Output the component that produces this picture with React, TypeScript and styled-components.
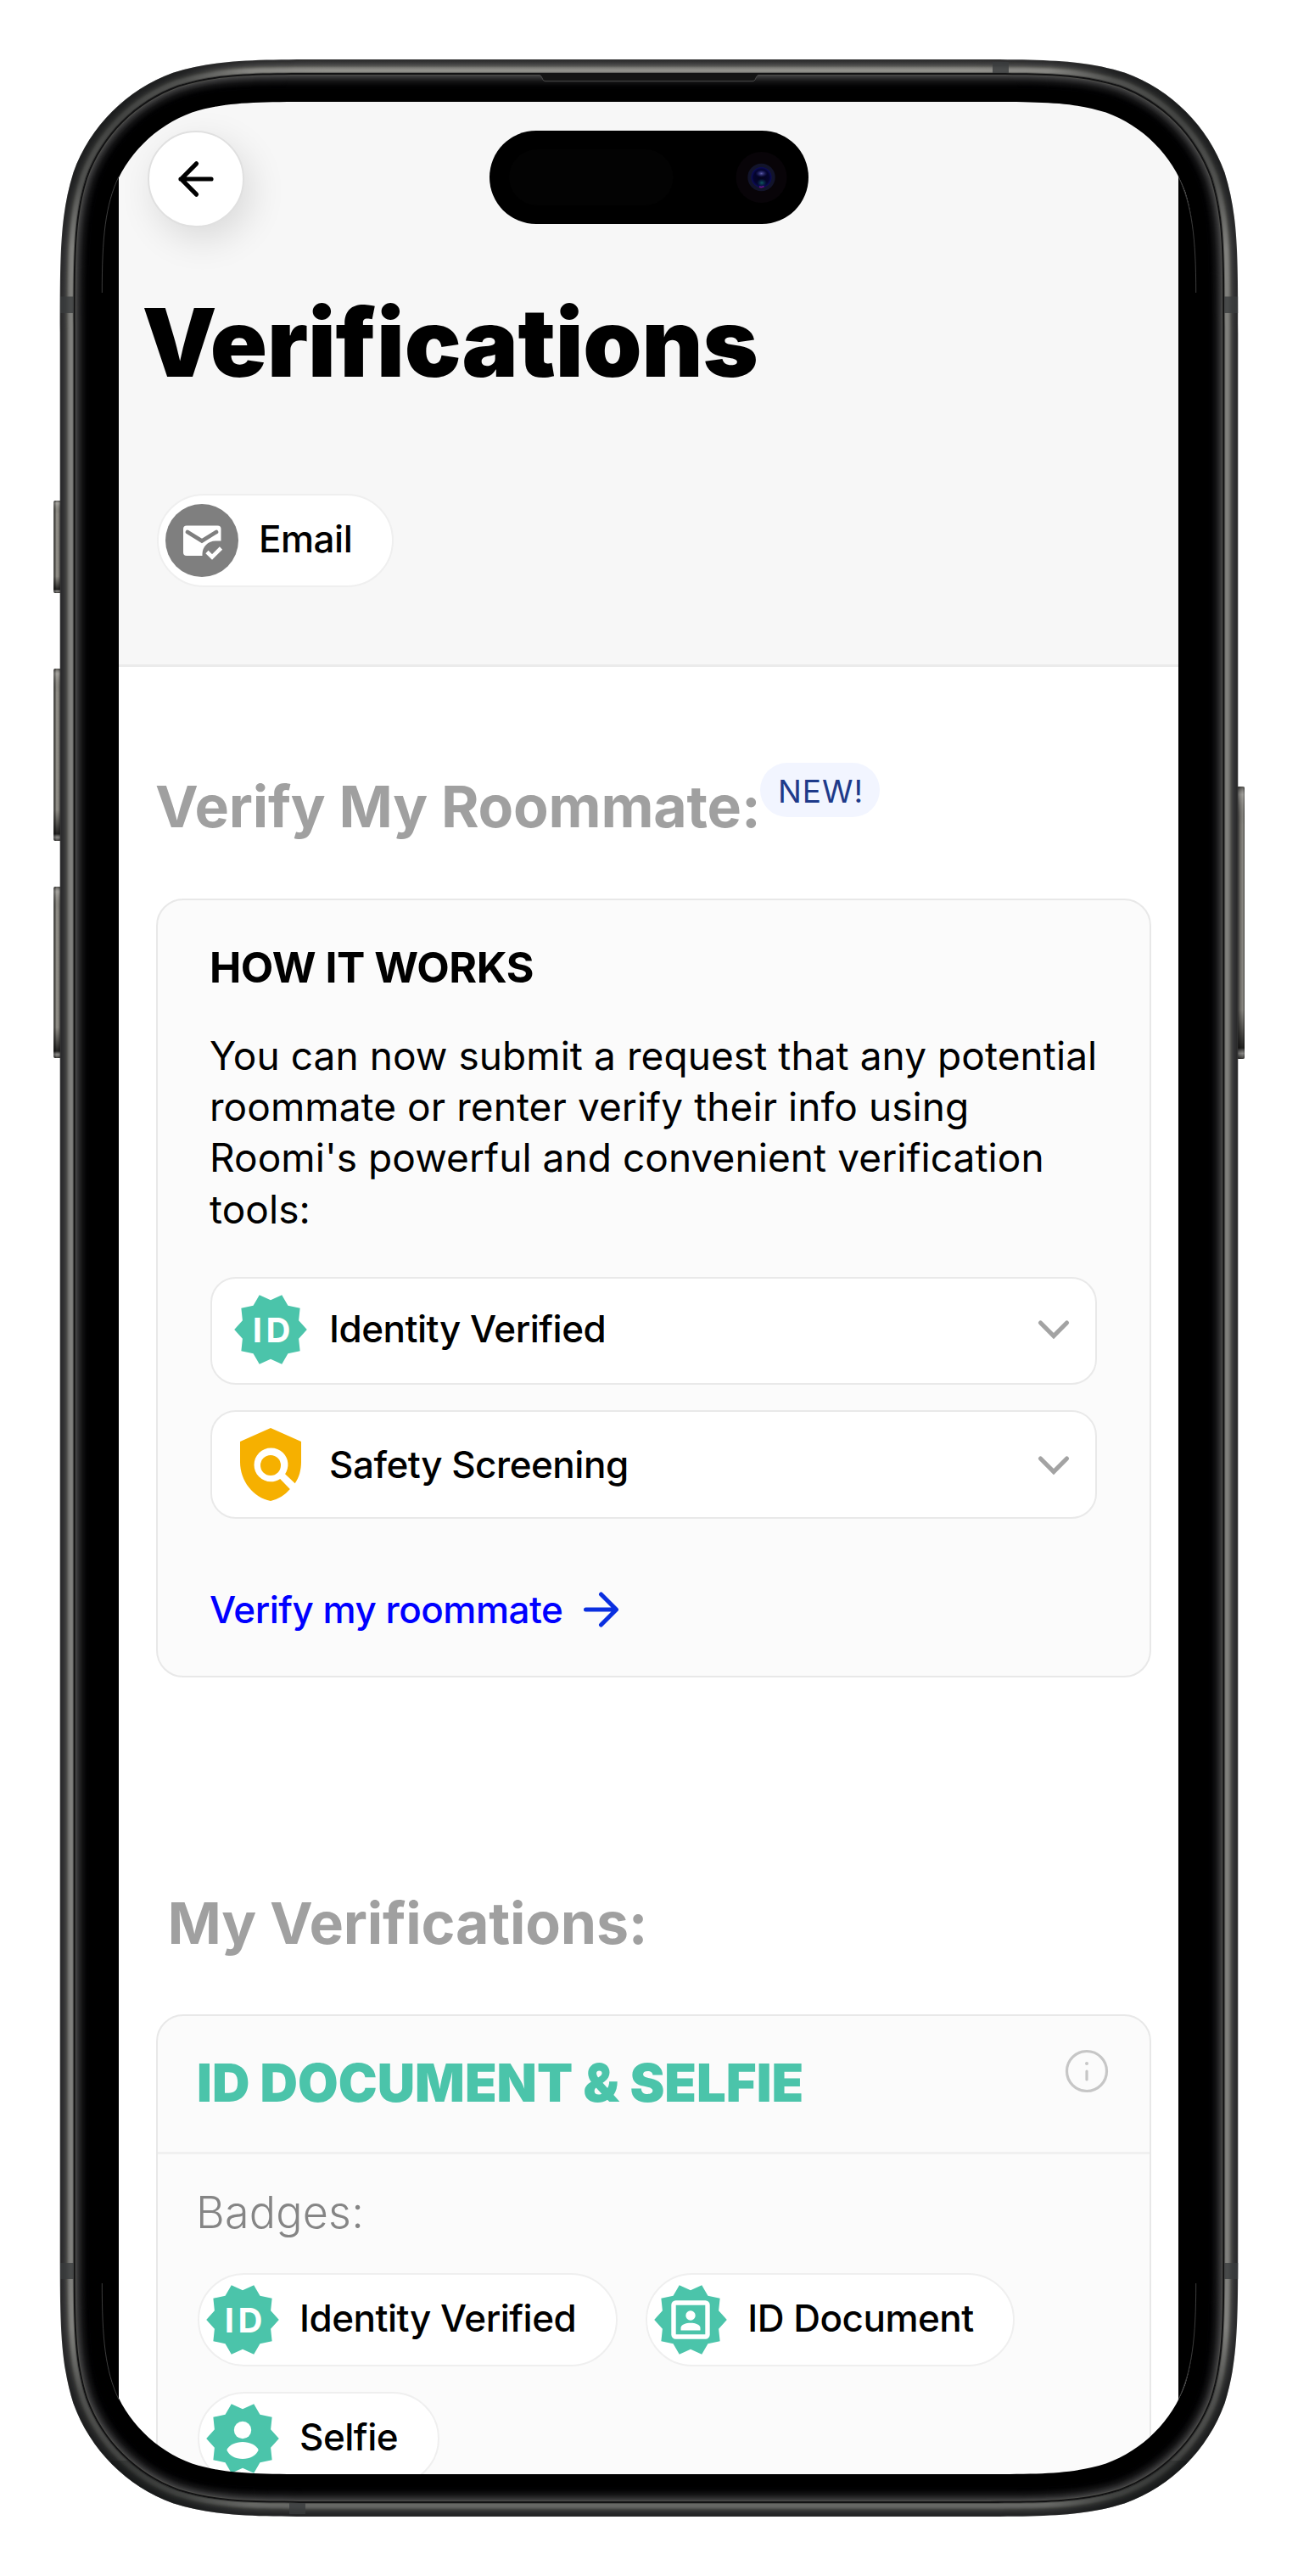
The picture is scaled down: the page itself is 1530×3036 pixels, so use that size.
import React from "react";
import styled, { createGlobalStyle } from "styled-components";

const TEAL = "#4bc4aa";

const GlobalStyle = createGlobalStyle`
  *, *::before, *::after { box-sizing: border-box; }
  html, body { margin: 0; background: #fff; }
  body { font-family: Inter, "Liberation Sans", sans-serif; color: #000; }
  h1, h2, h3, p { margin: 0; font-weight: inherit; }
  svg { display: block; flex: none; }
  button { font: inherit; color: inherit; cursor: pointer; text-align: left; }
`;

/* ---------- layout ---------- */

const Phone = styled.div`
  position: relative;
  width: 1530px;
  height: 3036px;
  padding: 120px 141px 120px 140px;
  overflow: hidden;
`;

const Screen = styled.div`
  display: flex;
  flex-direction: column;
  height: 2796px;
  overflow: hidden;
  background: #fff;
`;

const Header = styled.header`
  flex: none;
  height: 666px;
  padding: 34px 30px 0;
  background: #f7f7f7;
  border-bottom: 3px solid #ebebeb;
`;

const BackButton = styled.button`
  display: flex;
  align-items: center;
  justify-content: center;
  width: 114px;
  height: 114px;
  margin-left: 4px;
  padding: 0;
  border: 2px solid #e0e0e0;
  border-radius: 50%;
  background: #fff;
  box-shadow: 8px 14px 44px rgba(0, 0, 0, 0.12);
`;

const Title = styled.h1`
  margin: 76px 0 0 -2.5px;
  font-size: 111px;
  line-height: 120px;
  font-weight: 900;
  letter-spacing: -0.18px;
`;

const ChipList = styled.div<{ $top: number; $left: number }>`
  display: flex;
  flex-wrap: wrap;
  gap: 30px 33px;
  margin: ${(p) => p.$top}px 0 0 ${(p) => p.$left}px;
`;

const ChipBox = styled.div`
  display: flex;
  align-items: center;
  height: 110px;
  padding: 0 46.5px 0 6px;
  border: 2px solid #efefef;
  border-radius: 55px;
  background: #fff;
`;

const Label = styled.span`
  font-size: 44px;
  line-height: 60px;
  font-weight: 500;
  letter-spacing: -0.5px;
  white-space: nowrap;
`;

const ChipLabel = styled(Label)`
  margin: -4px 0 0 22.5px;
`;

const Main = styled.main`
  flex: none;
  display: flex;
  flex-direction: column;
  padding: 113px 32px 0 44px;
`;

const SectionHead = styled.div<{ $top?: number; $indent?: number }>`
  display: flex;
  align-items: flex-start;
  height: 80px;
  margin-top: ${(p) => p.$top ?? 0}px;
  padding-left: ${(p) => p.$indent ?? 0}px;
`;

const SectionTitle = styled.h2`
  margin: 11px 0 0 -1px;
  font-size: 68px;
  line-height: 80px;
  font-weight: 700;
  letter-spacing: -0.2px;
  color: #a0a0a0;
  white-space: nowrap;
`;

const NewBadge = styled.span`
  height: 64px;
  padding: 0 19px 0 20.5px;
  border-radius: 32px;
  background: #f2f5ff;
  color: #1e3a8a;
  font-size: 37px;
  line-height: 67px;
  letter-spacing: 1px;
`;

const Card = styled.section<{ $top: number }>`
  margin-top: ${(p) => p.$top}px;
  border: 2px solid #e8e8e8;
  border-radius: 32px;
  background: #fbfbfb;
`;

const HowCard = styled(Card)`
  display: flex;
  flex-direction: column;
  height: 918px;
  padding: 49px 62px 0;
`;

const HowTitle = styled.h3`
  margin-left: -1px;
  font-size: 50px;
  line-height: 60px;
  font-weight: 700;
  letter-spacing: -0.5px;
`;

const HowText = styled.p`
  margin: 44px -12px 0 -1px;
  font-size: 46px;
  line-height: 60.2px;
  letter-spacing: 0.07px;
`;

const OptionList = styled.div`
  display: flex;
  flex-direction: column;
  gap: 30px;
  margin-top: 50px;
`;

const Option = styled.button<{ $top?: number; $bottom?: number }>`
  display: flex;
  align-items: center;
  height: 127.5px;
  padding: ${(p) => p.$top ?? 0}px 29px ${(p) => p.$bottom ?? 0}px 24px;
  border: 2px solid #e9e9e9;
  border-radius: 30px;
  background: #fff;
`;

const OptionLabel = styled(Label)`
  flex: 1;
  margin: -3px 0 0 24px;
`;

const VerifyLink = styled.a`
  display: flex;
  align-items: center;
  gap: 23px;
  margin-top: 77px;
  margin-left: -1px;
  color: #0000ff;
  text-decoration: none;
`;

const DocCard = styled(Card)`
  height: 700px;
`;

const DocHead = styled.div`
  display: flex;
  justify-content: space-between;
  height: 163.5px;
  padding: 39px 48px 0 46px;
  border-bottom: 3px solid #f0f0f0;
`;

const DocTitle = styled.h3`
  margin-top: 5px;
  font-size: 61.5px;
  line-height: 70px;
  font-weight: 900;
  color: ${TEAL};
`;

const BadgesLabel = styled.p`
  margin: 38.5px 0 0 45px;
  font-size: 52px;
  line-height: 60px;
  font-weight: 300;
  letter-spacing: 0.2px;
  color: #858585;
`;

const Bezel = styled.svg`
  position: absolute;
  inset: 0;
  pointer-events: none;
`;

/* ---------- icons ---------- */

const starPoints = Array.from({ length: 20 }, (_, i) => {
  const r = i % 2 ? 34.8 : 42.8;
  const a = (i * Math.PI) / 10;
  return `${(45 + r * Math.cos(a)).toFixed(2)},${(45 + r * Math.sin(a)).toFixed(2)}`;
}).join(" ");

const StarBadge = ({ children }: { children: React.ReactNode }) => (
  <svg width="90" height="90" viewBox="0 0 90 90">
    <polygon points={starPoints} fill={TEAL} />
    {children}
  </svg>
);

const IdIcon = () => (
  <StarBadge>
    <text
      x="23.8 39.6"
      y="59.5"
      fill="#fff"
      fontFamily='Inter, "Liberation Sans", sans-serif'
      fontSize="40"
      fontWeight="700"
    >
      ID
    </text>
  </StarBadge>
);

const DocumentIcon = () => (
  <StarBadge>
    <rect x="25" y="25" width="40" height="40" rx="2.5" fill="none" stroke="#fff" strokeWidth="5.4" />
    <circle cx="45" cy="40" r="5.7" fill="#fff" />
    <path d="M33.5 57.5v-2.8c0-4.2 6.2-5.9 11.5-5.9s11.5 1.7 11.5 5.9v2.8z" fill="#fff" />
  </StarBadge>
);

const SelfieIcon = () => (
  <StarBadge>
    <circle cx="45" cy="35" r="10.2" fill="#fff" />
    <path d="M26.3 58.5C29 52.5 37 49 45 49s16 3.5 18.7 9.5C61 65 53.5 69 45 69s-16-4-18.7-10.5z" fill="#fff" />
  </StarBadge>
);

const MailIcon = () => (
  <svg width="90" height="90" viewBox="0 0 90 90">
    <circle cx="45" cy="45" r="43" fill="#7f7f7f" />
    <rect x="23" y="27.5" width="44.5" height="35.5" rx="4" fill="#fff" />
    <path d="M28 35l17 10.5L62 35" fill="none" stroke="#7f7f7f" strokeWidth="4.6" strokeLinecap="round" />
    <path d="M45.5 64V61c0-9 7-15.5 15.5-15.5h8V64z" fill="#7f7f7f" />
    <path d="M51 58.5l6 6L67.5 54" fill="none" stroke="#fff" strokeWidth="4.6" />
  </svg>
);

const ShieldIcon = () => (
  <svg width="90" height="96" viewBox="0.75 0 22.5 24" fill="#f6b000">
    <path d="M21 5l-9-4-9 4v6c0 5.55 3.84 10.5 9 11.5 2.2-.5 4.2-1.7 5.7-3.5l-2.9-3c-1.94 1.29-4.5 1.1-6.2-.6-1.95-1.95-1.95-5.12 0-7.07s5.12-1.95 7.07 0c1.71 1.71 1.9 4.3.6 6.24l2.9 2.75C20.4 15.6 21 13.38 21 11z" />
    <circle cx="12" cy="12" r="3" />
  </svg>
);

const ChevronIcon = () => (
  <svg width="40" height="26" viewBox="0 0 40 26" fill="none" stroke="#a3a3a3" strokeWidth="5.2" strokeLinecap="round">
    <path d="M4.5 5L20 20.5 35.5 5" />
  </svg>
);

const BackArrow = () => (
  <svg width="44" height="44" viewBox="0 0 44 44" fill="none" stroke="#000" strokeWidth="5.2" strokeLinecap="round" strokeLinejoin="round">
    <path d="M40 22H4M22.5 3.8L4.5 22l18 18.2" />
  </svg>
);

const ForwardArrow = () => (
  <svg width="44" height="44" viewBox="0 0 44 44" fill="none" stroke="#0a2fe0" strokeWidth="5" strokeLinecap="round" strokeLinejoin="round">
    <path d="M4.5 22H40M22.5 4L40.5 22l-18 18" />
  </svg>
);

const InfoIcon = () => (
  <svg width="52" height="52" viewBox="0 0 52 52" fill="none" stroke="#c6c6c6" strokeWidth="3.2" strokeLinecap="round">
    <circle cx="26" cy="26" r="23.5" />
    <path d="M26 26v10" />
    <circle cx="26" cy="17" r="2" fill="#c6c6c6" stroke="none" />
  </svg>
);

/* ---------- phone body ---------- */

/* Rounded rectangle with continuous-curvature corners. */
const squircle = (x0: number, y0: number, x1: number, y1: number, r: number) => {
  const a = 1.52866 * r;
  const b = 1.08849 * r;
  const c = 0.86841 * r;
  const d = 0.63149 * r;
  const e = 0.07491 * r;
  const f = 0.37282 * r;
  const g = 0.16906 * r;
  return (
    `M${x0 + a} ${y0}H${x1 - a}` +
    `C${x1 - b} ${y0} ${x1 - c} ${y0} ${x1 - d} ${y0 + e}` +
    `C${x1 - f} ${y0 + g} ${x1 - g} ${y0 + f} ${x1 - e} ${y0 + d}` +
    `C${x1} ${y0 + c} ${x1} ${y0 + b} ${x1} ${y0 + a}V${y1 - a}` +
    `C${x1} ${y1 - b} ${x1} ${y1 - c} ${x1 - e} ${y1 - d}` +
    `C${x1 - g} ${y1 - f} ${x1 - f} ${y1 - g} ${x1 - d} ${y1 - e}` +
    `C${x1 - c} ${y1} ${x1 - b} ${y1} ${x1 - a} ${y1}H${x0 + a}` +
    `C${x0 + b} ${y1} ${x0 + c} ${y1} ${x0 + d} ${y1 - e}` +
    `C${x0 + f} ${y1 - g} ${x0 + g} ${y1 - f} ${x0 + e} ${y1 - d}` +
    `C${x0} ${y1 - c} ${x0} ${y1 - b} ${x0} ${y1 - a}V${y0 + a}` +
    `C${x0} ${y0 + b} ${x0} ${y0 + c} ${x0 + e} ${y0 + d}` +
    `C${x0 + g} ${y0 + f} ${x0 + f} ${y0 + g} ${x0 + d} ${y0 + e}` +
    `C${x0 + c} ${y0} ${x0 + b} ${y0} ${x0 + a} ${y0}Z`
  );
};

const ring = (inset: number) =>
  squircle(70.7 + inset, 70 + inset, 1459.3 - inset, 2966 - inset, 211 - inset);

const screenHole = squircle(120.3, 120, 1409.7, 2916, 168);

/* Grey level of the metal band and glass lip by distance from the outer edge. */
const tones: [number, number][] = [
  [0, 66], [1, 40], [3, 46], [6, 58], [8, 76], [10, 110], [12, 128], [14.5, 128],
  [15.5, 96], [16, 20], [17.5, 18], [18, 82], [19.5, 62], [22, 44], [26, 20], [31, 4], [34, 0],
];

const toneAt = (d: number) => {
  const i = tones.findIndex(([p]) => p >= d);
  if (i <= 0) return tones[0][1];
  const [p0, v0] = tones[i - 1];
  const [p1, v1] = tones[i];
  return v0 + ((v1 - v0) * (d - p0)) / (p1 - p0);
};

const bands = Array.from({ length: 34 }, (_, i) => {
  const v = Math.round(toneAt(i + 0.5));
  return { inset: i, fill: `rgb(${v},${v},${Math.max(0, v - (v > 70 ? 3 : -1))})` };
});

const corners = [
  [138, 137],
  [1392, 137],
  [138, 2899],
  [1392, 2899],
];

const leftButtons = [
  [590, 109],
  [788, 203],
  [1045, 202],
];

const PhoneFrame = () => (
  <Bezel width="1530" height="3036" viewBox="0 0 1530 3036">
    <defs>
      <radialGradient id="cornerShade">
        <stop offset="0" stopColor="#101212" stopOpacity="0.55" />
        <stop offset="0.55" stopColor="#101212" stopOpacity="0.42" />
        <stop offset="1" stopColor="#101212" stopOpacity="0" />
      </radialGradient>
      <linearGradient id="topLight" x1="0" x2="0" y1="70" y2="86" gradientUnits="userSpaceOnUse">
        <stop offset="0" stopColor="#a5a39c" stopOpacity="0" />
        <stop offset="0.5" stopColor="#a5a39c" stopOpacity="0.15" />
        <stop offset="0.85" stopColor="#a5a39c" stopOpacity="0.5" />
        <stop offset="1" stopColor="#a5a39c" stopOpacity="0" />
      </linearGradient>
      <linearGradient id="topFade" x1="220" x2="1310" y1="0" y2="0" gradientUnits="userSpaceOnUse">
        <stop offset="0" stopColor="#000" />
        <stop offset="0.15" stopColor="#fff" />
        <stop offset="0.85" stopColor="#fff" />
        <stop offset="1" stopColor="#000" />
      </linearGradient>
      <mask id="topMask" maskUnits="userSpaceOnUse" x="220" y="70" width="1090" height="20">
        <rect x="220" y="70" width="1090" height="20" fill="url(#topFade)" />
      </mask>
      <linearGradient id="leftKey" x1="0" x2="1" y1="0" y2="0">
        <stop offset="0" stopColor="#2c2c2a" />
        <stop offset="0.2" stopColor="#55544f" />
        <stop offset="0.4" stopColor="#97958e" />
        <stop offset="0.7" stopColor="#77756f" />
        <stop offset="1" stopColor="#2a2a29" />
      </linearGradient>
      <linearGradient id="rightKey" x1="1" x2="0" y1="0" y2="0">
        <stop offset="0" stopColor="#2c2c2a" />
        <stop offset="0.2" stopColor="#8f8d87" />
        <stop offset="0.5" stopColor="#716f6a" />
        <stop offset="1" stopColor="#2a2a29" />
      </linearGradient>
      <linearGradient id="keyShade" x1="0" x2="0" y1="0" y2="1">
        <stop offset="0" stopColor="#000" stopOpacity="0.4" />
        <stop offset="0.03" stopColor="#fff" stopOpacity="0.2" />
        <stop offset="0.14" stopColor="#000" stopOpacity="0" />
        <stop offset="0.82" stopColor="#000" stopOpacity="0" />
        <stop offset="0.96" stopColor="#000" stopOpacity="0.75" />
        <stop offset="0.98" stopColor="#888" stopOpacity="0.5" />
        <stop offset="1" stopColor="#000" stopOpacity="0.6" />
      </linearGradient>
      <radialGradient id="lens" cx="0.5" cy="0.5" r="0.5">
        <stop offset="0" stopColor="#03031c" />
        <stop offset="0.75" stopColor="#04042e" />
        <stop offset="1" stopColor="#0c0c5c" />
      </radialGradient>
      <radialGradient id="lensTop">
        <stop offset="0" stopColor="#6a6ac0" stopOpacity="0.85" />
        <stop offset="1" stopColor="#2a2a90" stopOpacity="0" />
      </radialGradient>
      <radialGradient id="lensBottom">
        <stop offset="0" stopColor="#10706a" stopOpacity="0.8" />
        <stop offset="1" stopColor="#0c3c6a" stopOpacity="0" />
      </radialGradient>
      <clipPath id="bodyClip">
        <path d={ring(0) + ring(16)} clipRule="evenodd" />
      </clipPath>
    </defs>

    {leftButtons.map(([y, h]) => (
      <g key={y}>
        <rect x="63.2" y={y} width="9" height={h} rx="2" fill="url(#leftKey)" />
        <rect x="63.2" y={y} width="9" height={h} rx="2" fill="url(#keyShade)" />
      </g>
    ))}
    <rect x="1458" y="927" width="9" height="321" rx="2" fill="url(#rightKey)" />
    <rect x="1458" y="927" width="9" height="321" rx="2" fill="url(#keyShade)" />

    <path d={ring(4) + screenHole} fillRule="evenodd" fill="#000" />
    {bands.map(({ inset, fill }) => (
      <path key={inset} d={ring(inset) + ring(inset + 2)} fillRule="evenodd" fill={fill} />
    ))}
    <path
      d="M140 207V2829C124 2794 119 2756 119 2691V345C119 280 124 242 140 207zM1389 207V2829C1406 2794 1411 2756 1411 2691V345C1411 280 1406 242 1389 207z"
      fill="#000"
    />
    <path
      d="M140 208C124 242 120.3 280 120.3 345M1389 208C1405 242 1409.7 280 1409.7 345M140 2828C124 2794 120.3 2756 120.3 2691M1389 2828C1405 2794 1409.7 2756 1409.7 2691"
      fill="none"
      stroke="#565656"
      strokeWidth="0.7"
    />

    <g clipPath="url(#bodyClip)">
      <rect x="220" y="70" width="1090" height="17" fill="url(#topLight)" mask="url(#topMask)" />
      {corners.map(([cx, cy]) => (
        <circle key={`${cx}-${cy}`} cx={cx} cy={cy} r="165" fill="url(#cornerShade)" />
      ))}
      <rect x="60" y="2900" width="1410" height="70" fill="#0a0c0c" opacity="0.22" />
      <g fill="#3a3c3d" opacity="0.8">
        <path d="M71 349.5h17v19.5H71zM1442 349.5h18v19.5h-18zM1170 73h19v14h-19z" />
        <path d="M71 2667h17v19H71zM1442 2667h18v19h-18zM341 2949h19v14h-19z" />
      </g>
    </g>

    <path d="M634 88c3 0 4 1 5 3.5 1.2 3 2 4.2 5 4.2h242c3 0 3.8-1.2 5-4.2 1-2.5 2-3.5 5-3.5z" fill="#141414" />
    <path
      d="M634 88.5c3 0 4 1 5 3.5 1.2 3 2 3.7 5 3.7h242c3 0 3.8-.7 5-3.7 1-2.5 2-3.5 5-3.5"
      fill="none"
      stroke="#4c4c4c"
      strokeWidth="1"
    />

    <rect x="577" y="154" width="376" height="110" rx="55" fill="#000" />
    <rect x="600" y="176" width="193.5" height="66" rx="33" fill="#030303" />
    <circle cx="897.5" cy="209" r="30" fill="#080408" />
    <circle cx="897.5" cy="209" r="16.2" fill="#12142b" />
    <circle cx="897.5" cy="209" r="12" fill="url(#lens)" />
    <ellipse cx="897.5" cy="204.5" rx="7" ry="4.5" fill="url(#lensTop)" />
    <ellipse cx="898" cy="215.5" rx="6" ry="5" fill="url(#lensBottom)" />
    <path d="M895 220.2q3 1 5.5-.6" fill="none" stroke="#6a1288" strokeWidth="1.8" />
  </Bezel>
);

/* ---------- screen ---------- */

const Chip = ({ icon, label }: { icon: React.ReactNode; label: string }) => (
  <ChipBox>
    {icon}
    <ChipLabel>{label}</ChipLabel>
  </ChipBox>
);

export default function App() {
  return (
    <>
      <GlobalStyle />
      <Phone>
        <Screen>
          <Header>
            <BackButton aria-label="Back">
              <BackArrow />
            </BackButton>
            <Title>Verifications</Title>
            <ChipList $top={118} $left={14.5}>
              <Chip icon={<MailIcon />} label="Email" />
            </ChipList>
          </Header>

          <Main>
            <SectionHead>
              <SectionTitle>Verify My Roommate:</SectionTitle>
              <NewBadge>NEW!</NewBadge>
            </SectionHead>
            <HowCard $top={80}>
              <HowTitle>HOW IT WORKS</HowTitle>
              <HowText>
                You can now submit a request that any potential roommate or renter verify their info
                using Roomi's powerful and convenient verification tools:
              </HowText>
              <OptionList>
                <Option $bottom={2.5}>
                  <IdIcon />
                  <OptionLabel>Identity Verified</OptionLabel>
                  <ChevronIcon />
                </Option>
                <Option $top={2}>
                  <ShieldIcon />
                  <OptionLabel>Safety Screening</OptionLabel>
                  <ChevronIcon />
                </Option>
              </OptionList>
              <VerifyLink>
                <Label>Verify my roommate</Label>
                <ForwardArrow />
              </VerifyLink>
            </HowCard>

            <SectionHead $top={237.5} $indent={14.5}>
              <SectionTitle>My Verifications:</SectionTitle>
            </SectionHead>
            <DocCard $top={79}>
              <DocHead>
                <DocTitle>ID DOCUMENT &amp; SELFIE</DocTitle>
                <InfoIcon />
              </DocHead>
              <BadgesLabel>Badges:</BadgesLabel>
              <ChipList $top={41} $left={46.5}>
                <Chip icon={<IdIcon />} label="Identity Verified" />
                <Chip icon={<DocumentIcon />} label="ID Document" />
                <Chip icon={<SelfieIcon />} label="Selfie" />
              </ChipList>
            </DocCard>
          </Main>
        </Screen>
        <PhoneFrame />
      </Phone>
    </>
  );
}
